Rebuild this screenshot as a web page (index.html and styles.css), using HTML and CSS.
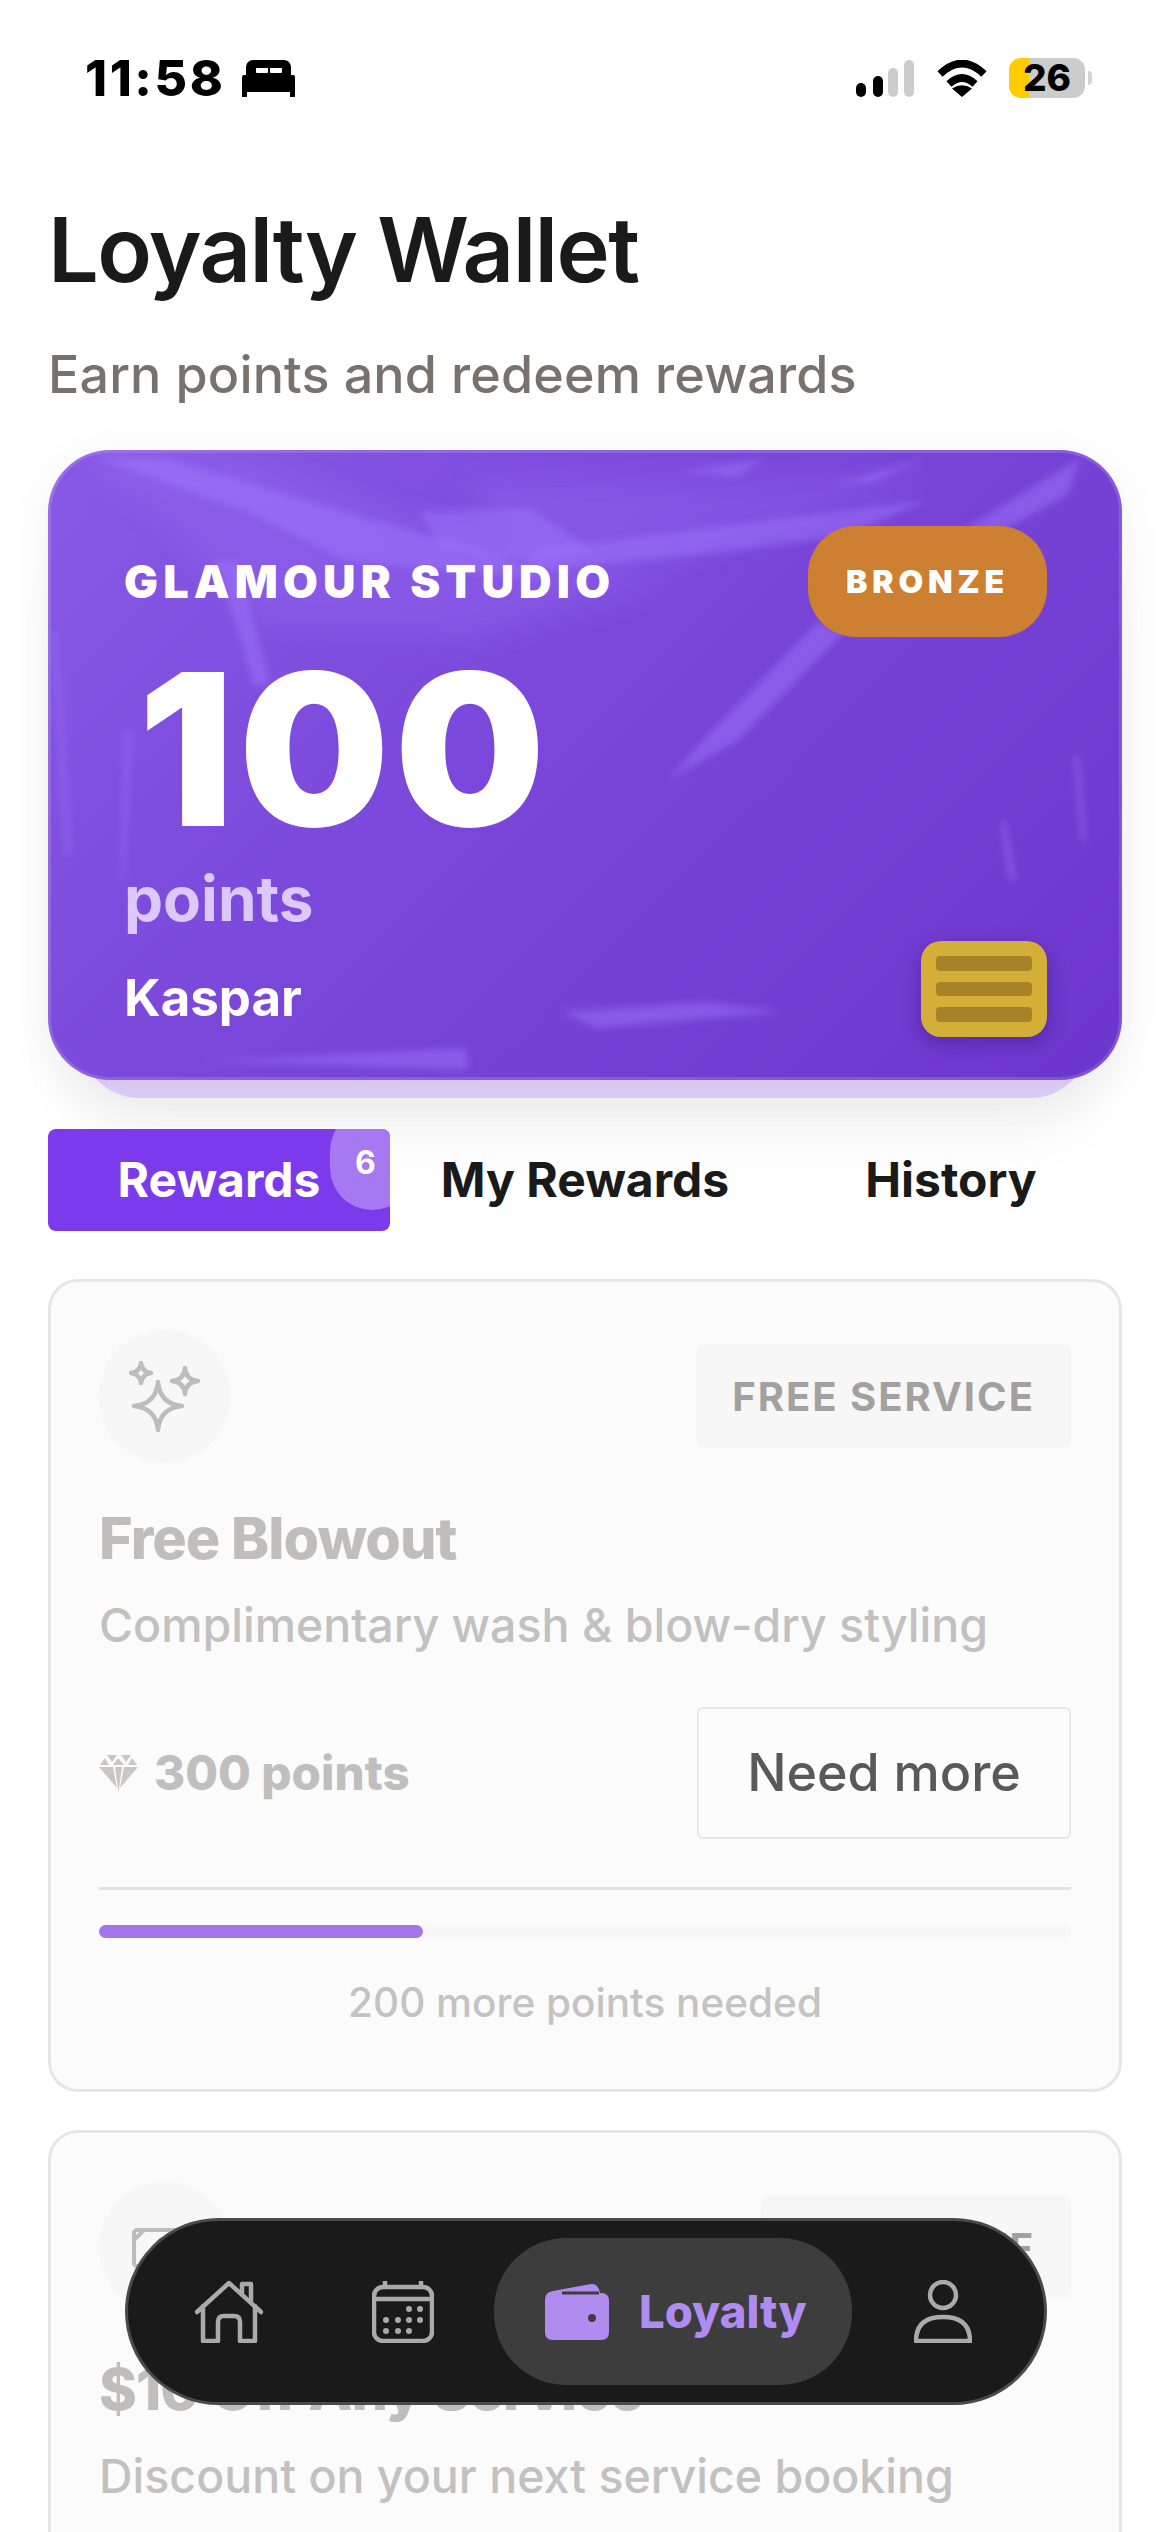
FILE: index.html
```html
<!DOCTYPE html>
<html lang="en">
<head>
<meta charset="utf-8">
<title>Loyalty Wallet</title>
<link rel="stylesheet" href="styles.css">
</head>
<body>
<div class="page">
  <header class="status">
    <div class="status-left">
      <span class="time">11:58</span>
      <svg class="bed" viewBox="0 0 53 37"><path fill-rule="evenodd" d="M11 0H42a7 7 0 0 1 7 7V15H51a2 2 0 0 1 2 2V37H48V32H5V37H0V17a2 2 0 0 1 2-2H4V7a7 7 0 0 1 7-7ZM14 8v4a1 1 0 0 0 1 1H25a1 1 0 0 0 1-1V8ZM28 8v4a1 1 0 0 0 1 1H39a1 1 0 0 0 1-1V8Z"/></svg>
    </div>
    <div class="status-right">
      <svg class="signal" viewBox="0 0 58 37"><rect x="0" y="23" width="10" height="14" rx="5"/><rect x="17" y="16" width="10" height="21" rx="5"/><rect class="off" x="32" y="8" width="10" height="29" rx="5"/><rect class="off" x="48" y="0" width="10" height="37" rx="5"/></svg>
      <svg class="wifi" viewBox="0 0 50 37"><path d="M3 14Q25-7 47 14M12 24Q25 12 38 24" fill="none" stroke="#000" stroke-width="7.5"/><path d="M25 37 15 28.500Q25 22 35 28.500Z"/></svg>
      <span class="battery">26</span>
    </div>
  </header>

  <h1 class="title">Loyalty Wallet</h1>
  <p class="subtitle">Earn points and redeem rewards</p>

  <section class="wallet-card">
    <div class="card-back"></div>
    <div class="card-face">
      <svg class="sheen" viewBox="0 0 1074 630" preserveAspectRatio="none">
        <defs>
          <filter id="soft" x="-20%" y="-20%" width="140%" height="140%"><feGaussianBlur stdDeviation="3.500"/></filter>
          <filter id="wide" x="-20%" y="-20%" width="140%" height="140%"><feGaussianBlur stdDeviation="14"/></filter>
        </defs>
        <g filter="url(#wide)" class="sheen-wide">
          <polygon points="30,5 180,5 520,120 640,130 420,190 210,170 120,70"/>
          <polygon points="420,30 880,30 640,110 480,130"/>
        </g>
        <g filter="url(#soft)" class="sheen-shapes">
          <polygon points="47,7 113,7 324,70 447,104 500,130 295,110 200,62"/>
          <polygon points="372,62 480,58 545,100 470,110 395,98"/>
          <polygon points="880,50 491,100 470,122 673,102 796,86"/>
          <polygon points="770,172 800,178 690,290 620,330 660,285"/>
          <polygon points="630,22 716,9 690,26"/>
          <polygon points="780,36 876,9 826,32"/>
          <polygon points="915,80 1032,8 1020,44 952,82"/>
          <polygon points="515,562 658,552 735,562 549,578"/>
          <polygon points="150,612 418,598 420,620 273,614"/>
          <polygon points="953,373 958,373 968,430 961,430"/>
          <polygon points="1026,306 1031,306 1038,390 1033,390"/>
          <polygon points="4,181 9,181 22,404 18,404"/>
          <polygon points="78,280 83,280 76,430 73,430"/>
          <polygon points="168,110 190,112 222,235 206,235"/>
        </g>
      </svg>
      <div class="card-top">
        <span class="studio">GLAMOUR STUDIO</span>
        <span class="tier">BRONZE</span>
      </div>
      <div class="balance">100</div>
      <div class="balance-unit">points</div>
      <div class="card-bottom">
        <span class="holder">Kaspar</span>
        <span class="chip"><i></i><i></i><i></i></span>
      </div>
    </div>
  </section>

  <nav class="tabs">
    <div class="tab tab-active">Rewards<span class="tab-badge">6</span></div>
    <div class="tab">My Rewards</div>
    <div class="tab">History</div>
  </nav>

  <section class="rewards">
    <article class="reward">
      <div class="reward-head">
        <span class="reward-icon">
          <svg class="sparkles" viewBox="0 0 72 72"><path d="M29 21Q31 43 53 45Q31 47 29 69Q27 47 5 45Q27 43 29 21Z"/><path d="M12 2Q13 11 22 12Q13 13 12 22Q11 13 2 12Q11 11 12 2Z"/><path d="M56 7Q57 19 69 20Q57 21 56 33Q55 21 43 20Q55 19 56 7Z"/></svg>
        </span>
        <span class="reward-tag">FREE SERVICE</span>
      </div>
      <h2 class="reward-title">Free Blowout</h2>
      <p class="reward-desc">Complimentary wash &amp; blow-dry styling</p>
      <div class="reward-action">
        <span class="cost">
          <svg class="gem" viewBox="0 0 39 37"><polygon points="8,0 18,0 13,7"/><polygon points="22,0 32,0 27,7"/><polygon points="6,3 1,10 10,10"/><polygon points="19,3 14,10 25,10"/><polygon points="33,3 29,10 38,10"/><polygon points="0,12 14,12 18,33"/><polygon points="16,12 23,12 19.500,37"/><polygon points="25,12 39,12 21,33"/></svg>
          300 points
        </span>
        <span class="need-more">Need more</span>
      </div>
      <div class="divider"></div>
      <div class="track"><div class="track-fill"></div></div>
      <p class="track-note">200 more points needed</p>
    </article>

    <article class="reward">
      <div class="reward-head">
        <span class="reward-icon">
          <svg class="bill" viewBox="0 0 66 40"><rect x="2" y="2" width="62" height="36" rx="3"/><circle cx="33" cy="20" r="9"/><path d="M2 12 12 2M54 38 64 28"/></svg>
        </span>
        <span class="reward-tag">VALUE OFF</span>
      </div>
      <h2 class="reward-title">$10 Off Any Service</h2>
      <p class="reward-desc">Discount on your next service booking</p>
    </article>
  </section>

  <nav class="dock">
    <span class="dock-slot dock-home">
      <svg class="dock-icon" width="68" height="63" viewBox="0 0 68 63"><path d="M2 32 34 3 66 32M47 13V4H56V22M8 26V61H23V42Q23 36 29 36H39Q45 36 45 42V61H60V26"/></svg>
    </span>
    <span class="dock-slot">
      <svg class="dock-icon" width="62" height="62" viewBox="0 0 62 62"><rect x="2" y="6" width="58" height="54" rx="9"/><path d="M2 18H60M13 0V6M49 0V6"/><g class="dock-dots"><circle cx="37" cy="28" r="3"/><circle cx="48" cy="28" r="3"/><circle cx="14" cy="39" r="3"/><circle cx="26" cy="39" r="3"/><circle cx="37" cy="39" r="3"/><circle cx="48" cy="39" r="3"/><circle cx="14" cy="50" r="3"/><circle cx="26" cy="50" r="3"/><circle cx="37" cy="50" r="3"/></g></svg>
    </span>
    <span class="dock-active">
      <svg class="dock-wallet" width="64" height="56" viewBox="0 0 64 56"><path class="wallet-body" d="M0 16Q0 8 8 7L46 0Q53-1 55 9H56Q64 9 64 17V48Q64 56 56 56H8Q0 56 0 48Z"/><path class="wallet-slit" d="M17 9H54"/><circle class="wallet-dot" cx="47" cy="34" r="4"/></svg>
      <span class="dock-label">Loyalty</span>
    </span>
    <span class="dock-slot">
      <svg class="dock-icon" width="58" height="63" viewBox="0 0 58 63"><circle cx="29" cy="15" r="13"/><path d="M2 61Q2 37 29 37Q56 37 56 61Z"/></svg>
    </span>
  </nav>
</div>
</body>
</html>
```
FILE: styles.css
```css
* { box-sizing: border-box; }
html, body { margin: 0; padding: 0; background: #fff; }
.page {
  position: relative;
  width: 1170px;
  height: 2532px;
  overflow: hidden;
  padding: 0 48px;
  background: #fff;
  font-family: Inter, "Noto Sans", sans-serif;
  color: #1a1a1a;
}
/* status bar */
.status {
  height: 156px;
  margin: 0 -48px;
  padding: 0 85px;
  display: flex;
  justify-content: space-between;
  align-items: center;
}
.status-left { display: flex; align-items: center; gap: 16px; }
.time { font-size: 50px; font-weight: 800; line-height: 60px; letter-spacing: 2.600px; color: #000; }
.bed { width: 53px; height: 37px; }
.status-right { display: flex; align-items: center; }
.signal { width: 58px; height: 37px; margin-right: 23px; }
.signal .off { fill: #ccc; }
.wifi { width: 50px; height: 37px; margin-right: 22px; }
.battery {
  position: relative;
  width: 76px;
  height: 40px;
  border-radius: 12px;
  background: linear-gradient(90deg, #fc0 26%, #ccc 26%);
  color: #000;
  font-size: 37px;
  font-weight: 800;
  line-height: 40px;
  text-align: center;
}
.battery::after {
  content: "";
  position: absolute;
  right: -7px;
  top: 13px;
  width: 4px;
  height: 14px;
  border-radius: 0 4px 4px 0;
  background: #d5d5d5;
}
/* heading */
.title { margin: 40px 0 0; font-size: 90px; font-weight: 600; line-height: 108px; letter-spacing: -1.600px; color: #1a1a1a; }
.subtitle { margin: 41px 0 0; font-size: 52px; font-weight: 500; line-height: 60px; letter-spacing: .15px; color: #78716c; }
/* wallet card */
.wallet-card { position: relative; margin-top: 45px; height: 630px; }
.card-back {
  position: absolute;
  left: 32px;
  right: 32px;
  top: 100px;
  height: 548px;
  border-radius: 0 0 60px 60px;
  background: #e0cffb;
  box-shadow: 0 24px 70px rgba(0, 0, 0, .07);
}
.card-face {
  position: relative;
  height: 630px;
  padding: 76px 75px 0 76px;
  border-radius: 62px;
  overflow: hidden;
  background: linear-gradient(135deg, #8859e6 0%, #7a47da 45%, #6c36cc 100%);
  box-shadow: inset 0 0 0 3px rgba(255, 255, 255, .14), 0 10px 50px rgba(0, 0, 0, .06);
  color: #fff;
}
.sheen { position: absolute; left: 0; top: 0; width: 100%; height: 100%; }
.sheen-wide polygon { fill: #a37bff; fill-opacity: .22; }
.sheen-shapes polygon { fill: #a37bff; fill-opacity: .42; }
.card-top { position: relative; display: flex; justify-content: space-between; align-items: center; height: 111px; }
.studio { font-size: 45px; font-weight: 900; letter-spacing: 5.200px; }
.tier {
  width: 239px;
  height: 111px;
  border-radius: 48px;
  background: #cd7f32;
  font-size: 32px;
  font-weight: 900;
  letter-spacing: 4.800px;
  line-height: 111px;
  text-align: center;
}
.balance { position: relative; margin: 6px 0 0 14px; font-size: 212px; font-weight: 900; line-height: 212px; letter-spacing: 5px; }
.balance-unit { position: relative; margin-top: 8px; font-size: 62px; font-weight: 700; line-height: 72px; color: #dcc8fa; }
.card-bottom { position: absolute; left: 76px; right: 75px; top: 491px; display: flex; justify-content: space-between; align-items: flex-start; }
.holder { margin-top: 28px; font-size: 51px; font-weight: 700; line-height: 58px; }
.chip {
  display: flex;
  flex-direction: column;
  gap: 11px;
  width: 126px;
  height: 96px;
  padding: 15px;
  border-radius: 20px;
  background: #d4af37;
  box-shadow: 0 6px 18px rgba(40, 10, 90, .35);
}
.chip i { display: block; height: 15px; border-radius: 4px; background: #a68329; }
/* tabs */
.tabs { position: relative; margin-top: 49px; display: grid; grid-template-columns: repeat(3, 342px); gap: 24px; }
.tab { position: relative; height: 102px; overflow: hidden; border-radius: 8px; font-size: 48px; font-weight: 700; line-height: 102px; text-align: center; color: #1a1a1a; }
.tab-active { background: #7c3aed; color: #fff; }
.tab-badge {
  position: absolute;
  left: 282px;
  top: -20px;
  width: 84px;
  height: 101px;
  padding: 29px 13px 0 0;
  border-radius: 42px;
  background: #a679f3;
  font-size: 32px;
  line-height: 50px;
  text-align: center;
  color: #fff;
}
/* rewards */
.rewards { position: relative; margin-top: 48px; display: flex; flex-direction: column; gap: 38px; }
.reward { padding: 48px 48px 61px; border: 3px solid #e6e6e6; border-radius: 30px; background: #fbfbfb; }
.reward-head { display: flex; justify-content: space-between; align-items: center; height: 133px; }
.reward-icon { display: flex; justify-content: center; align-items: center; width: 131px; height: 133px; border-radius: 50%; background: #f7f7f7; }
.sparkles { width: 72px; height: 72px; }
.sparkles path { fill: none; stroke: #bdbdbd; stroke-width: 4.500; stroke-linejoin: round; }
.bill { width: 66px; height: 40px; }
.bill rect, .bill circle, .bill path { fill: none; stroke: #bdbdbd; stroke-width: 4; }
.reward-tag { padding: 0 36px; height: 103px; border-radius: 8px; background: #f7f7f7; font-size: 40px; font-weight: 700; letter-spacing: 2px; line-height: 103px; color: #a3a1a0; }
.reward-title { margin: 40px 0 0; font-size: 57.500px; font-weight: 800; line-height: 70px; letter-spacing: -1px; color: #bfbebd; }
.reward-desc { margin: 22px 0 0; font-size: 46.500px; font-weight: 500; line-height: 60px; color: #c2c1c0; }
.reward-action { margin-top: 52px; display: flex; justify-content: space-between; align-items: center; }
.cost { display: flex; align-items: center; gap: 16px; font-size: 47.500px; font-weight: 800; line-height: 60px; color: #c0bfbe; }
.gem { width: 39px; height: 37px; fill: #c8c7c6; }
.need-more { width: 374px; height: 132px; border: 2px solid #e8e8e8; border-radius: 6px; background: #fcfcfc; font-size: 52px; font-weight: 500; line-height: 128px; text-align: center; color: #595959; }
.divider { margin-top: 48px; height: 3px; background: #e3e3e3; }
.track { margin-top: 35px; height: 13px; border-radius: 7px; background: #f7f7f7; }
.track-fill { width: 33.300%; height: 100%; border-radius: 7px; background: #a374ea; }
.track-note { margin: 40px 0 0; font-size: 40.500px; font-weight: 500; line-height: 50px; text-align: center; color: #c4c3c2; }
/* dock */
.dock {
  position: absolute;
  left: 125px;
  top: 2218px;
  width: 922px;
  height: 187px;
  padding-left: 41px;
  display: flex;
  align-items: center;
  gap: 31px;
  border: 3px solid #4a4a4a;
  border-radius: 94px;
  background: #1a1a1a;
}
.dock-slot { display: flex; justify-content: center; width: 120px; }
.dock-home { margin-right: 23px; }
.dock-icon { fill: none; stroke: #aaa; stroke-width: 4.500; stroke-linecap: round; stroke-linejoin: round; }
.dock-dots circle { fill: #aaa; stroke: none; }
.dock-active { display: flex; align-items: center; gap: 30px; width: 358px; height: 147px; padding-left: 51px; border-radius: 72px; background: #3d3d3d; }
.wallet-body { fill: #b08cf0; }
.wallet-slit { fill: none; stroke: #3d3d3d; stroke-width: 3; }
.wallet-dot { fill: #3d3d3d; }
.dock-label { font-size: 45.500px; font-weight: 800; line-height: 54px; color: #b08cf0; }
```
